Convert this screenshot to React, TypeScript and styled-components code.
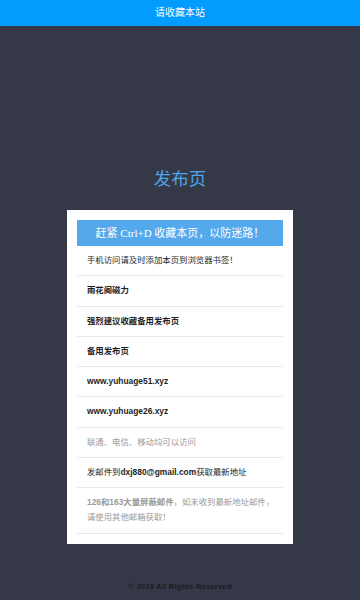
import styled, { createGlobalStyle } from 'styled-components';

const GlobalStyle = createGlobalStyle`
  html, body {
    margin: 0;
    padding: 0;
    background: #353846;
  }
  body {
    font-family: "Liberation Sans", "Noto Sans CJK SC", sans-serif;
  }
`;

const TopBar = styled.header`
  height: 26px;
  background: #019cfd;
  color: #fff;
  font-size: 10px;
  line-height: 26px;
  text-align: center;
`;

const Main = styled.main`
  display: flex;
  flex-direction: column;
  align-items: center;
  padding-top: 141px;
`;

const Title = styled.h1`
  margin: 0;
  height: 24px;
  line-height: 24px;
  font-size: 17.5px;
  font-weight: normal;
  color: #4ea6ea;
`;

const Card = styled.section`
  margin-top: 19px;
  width: 226px;
  box-sizing: border-box;
  padding: 10px;
  background: #fff;
`;

const Notice = styled.div`
  height: 26px;
  line-height: 26px;
  background: #53a9ec;
  color: #fff;
  text-align: center;
  font-family: "Liberation Serif", "Noto Sans CJK SC", serif;
  font-size: 11px;
`;

const Row = styled.div<{ $bold?: boolean; $muted?: boolean }>`
  padding: 7px 5px 7px 10px;
  line-height: 15.25px;
  font-size: 8.4px;
  border-bottom: 1px solid #e9e9e9;
  color: ${(p) => (p.$muted ? '#9a9a9a' : '#1e1e1e')};
  font-weight: ${(p) => (p.$bold ? 'bold' : 'normal')};
`;

const Strong = styled.b`
  font-weight: bold;
`;

const Footer = styled.footer`
  margin-top: 37px;
  line-height: 12px;
  font-size: 8px;
  font-weight: bold;
  color: #1c1d26;
  text-align: center;
`;

export default function App() {
  return (
    <>
      <GlobalStyle />
      <TopBar>请收藏本站</TopBar>
      <Main>
        <Title>发布页</Title>
        <Card>
          <Notice>赶紧 Ctrl+D 收藏本页，以防迷路！</Notice>
          <Row>手机访问请及时添加本页到浏览器书签！</Row>
          <Row $bold>雨花阁磁力</Row>
          <Row $bold>强烈建议收藏备用发布页</Row>
          <Row $bold>备用发布页</Row>
          <Row $bold>www.yuhuage51.xyz</Row>
          <Row $bold>www.yuhuage26.xyz</Row>
          <Row $muted>联通、电信、移动均可以访问</Row>
          <Row>
            发邮件到<Strong>dxj880@gmail.com</Strong>获取最新地址
          </Row>
          <Row $muted>
            <Strong>126和163大量屏蔽邮件</Strong>，如未收到最新地址邮件，请使用其他邮箱获取！
          </Row>
        </Card>
        <Footer>© 2018 All Rights Reserved</Footer>
      </Main>
    </>
  );
}
